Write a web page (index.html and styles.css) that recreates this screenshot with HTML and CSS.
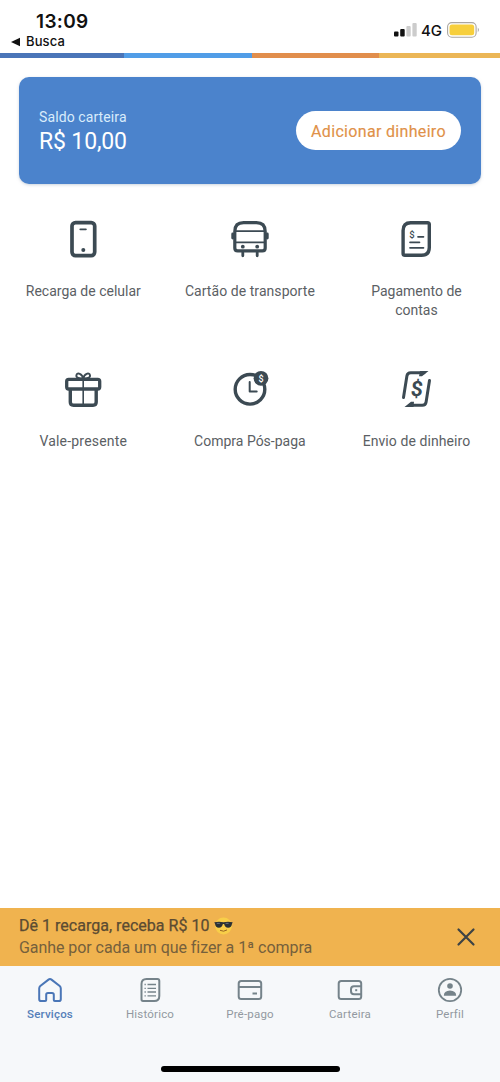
FILE: index.html
```html
<!DOCTYPE html>
<html lang="pt-BR">
<head>
<meta charset="utf-8">
<title>Serviços</title>
<link rel="stylesheet" href="styles.css">
</head>
<body>
<div class="app">
  <header class="status">
    <div class="status-left">
      <div class="time">13:09</div>
      <div class="back"><svg width="10" height="10" viewBox="0 0 10 10"><path d="M0 5 9 .7v8.6z" fill="#111"/></svg><span>Busca</span></div>
    </div>
    <div class="status-right">
      <svg width="23" height="14" viewBox="0 0 23 14"><rect x="0" y="8.5" width="4.5" height="5" rx="1" fill="#111"/><rect x="6.2" y="6" width="4.5" height="7.5" rx="1" fill="#111"/><rect x="12.4" y="3" width="4.3" height="10.5" rx="1" fill="#ccc"/><rect x="18.4" y="0" width="4.3" height="13.5" rx="1" fill="#ccc"/></svg>
      <span class="network">4G</span>
      <svg width="33" height="16" viewBox="0 0 33 16"><rect x=".6" y=".6" width="28.5" height="14.6" rx="4.2" fill="#fff" stroke="#aaa6a0" stroke-width="1.1"/><rect x="2.5" y="2.5" width="24.7" height="10.8" rx="2.5" fill="#f7cf3c"/><path d="M30.8 5.600q2 2.300 0 4.600z" fill="#999"/></svg>
    </div>
  </header>
  <div class="stripe"><i class="navy"></i><i class="sky"></i><i class="orange"></i><i class="gold"></i></div>

  <main class="content">
    <section class="balance">
      <div>
        <div class="balance-label">Saldo carteira</div>
        <div class="balance-value">R$ 10,00</div>
      </div>
      <button class="add">Adicionar dinheiro</button>
    </section>

    <section class="services">
      <div class="service">
        <svg class="icon" viewBox="0 0 40 40"><rect x="9" y="3.600" width="22.700" height="33" rx="3.500" stroke-width="3.700"/><path d="M17.300 10.300h5.600" stroke-width="1.800"/><circle cx="20.300" cy="31" r="2" class="solid"/></svg>
        <span class="t-recarga">Recarga de celular</span>
      </div>
      <div class="service">
        <svg class="icon" viewBox="0 0 40 40"><path d="M4.800 29V12.500Q4.800 3.700 13.600 3.700h12.800q8.800 0 8.800 8.800V29q0 2.900-2.900 2.900H7.700q-2.900 0-2.900-2.900z" stroke-width="3.200"/><path d="M6 12.200h28M6 23.400h28" stroke-width="1.800"/><path d="M2.700 15v4M37.300 15v4M12.800 33.500v3.300M27.200 33.500v3.300" stroke-width="2.800"/><circle cx="12.800" cy="27.700" r="1.900" class="solid"/><circle cx="27.200" cy="27.700" r="1.900" class="solid"/></svg>
        <span class="t-cartao">Cartão de transporte</span>
      </div>
      <div class="service">
        <svg class="icon" viewBox="0 0 40 40"><path d="M14.700 3.700H31.500q1.800 0 1.800 1.800V28.500q0 7.800-7.800 7.800H8.900q-1.800 0-1.800-1.800V11.500q0-7.800 7.600-7.800z" stroke-width="3.400"/><path d="M22 17.800h5.500M14 23.300h9.500M14 28.800h13.500" stroke-width="1.700"/><text x="13.200" y="18.800" font-size="9.500" class="dollar">$</text></svg>
        <span class="t-pagamento">Pagamento de<br>contas</span>
      </div>
      <div class="service">
        <svg class="icon" viewBox="0 0 40 40"><rect x="3.700" y="10.300" width="33" height="9.700" rx="2" stroke-width="3.300"/><path d="M7.300 21v12q0 3.200 3.200 3.200h19.500q3.200 0 3.200-3.200V21" stroke-width="3.400"/><path d="M20.200 10v27" stroke-width="1.600"/><path d="M20.200 9.500c-1-5-6-6.500-6.800-3.300-.6 2.800 3.400 3.300 6.800 3.300s7.400-.5 6.800-3.300c-.8-3.200-5.800-1.700-6.800 3.300z" stroke-width="1.900"/></svg>
        <span class="t-vale">Vale-presente</span>
      </div>
      <div class="service">
        <svg class="icon" viewBox="0 0 40 40"><circle cx="20" cy="20.300" r="14.800" stroke-width="3.400"/><path d="M19.700 13v9.500h7" stroke-width="2"/><circle cx="31" cy="9.300" r="7.400" class="solid"/><text x="28.400" y="12.600" font-size="9" class="dollar light">$</text></svg>
        <span class="t-compra">Compra Pós-paga</span>
      </div>
      <div class="service">
        <svg class="icon" viewBox="0 0 40 40"><path d="M7.500 28.500 10.900 7q.5-3.300 3.800-3.300H28M33.500 11.500 30.100 33q-.5 3.300-3.800 3.300H13.500" stroke-width="3"/><path d="M23 7.200h3l6.500-5.100H24zM18 32.800h-3l-6.500 5.100h9z" class="solid"/><text transform="translate(14.200 27.300) skewX(-5)" font-size="21" class="dollar big">$</text></svg>
        <span class="t-envio">Envio de dinheiro</span>
      </div>
    </section>
  </main>

  <aside class="promo">
    <div>
      <div class="promo-title"><span>Dê 1 recarga, receba R$ 10</span><svg width="19" height="18" viewBox="0 0 19 18"><circle cx="9.500" cy="9" r="8.400" fill="#f8ce49"/><path d="M.3 5.300Q5 4.300 9.500 5.300q4.500-1 9.200 0l-.7 1.500q-.5 4-3.900 4-3.200 0-4-3.700h-1.200q-.8 3.700-4 3.700-3.400 0-3.900-4z" fill="#2c3135"/><path d="M2.800 6.400h3M11.600 6.400h3" stroke="#75808a" stroke-width=".8"/><path d="M6 13.300q3.700 2 7-.4" fill="none" stroke="#986523" stroke-width="1"/></svg></div>
      <div class="promo-text">Ganhe por cada um que fizer a 1ª compra</div>
    </div>
    <svg class="close" width="20" height="20" viewBox="0 0 20 20"><path d="m2.500 2.500 15 15M17.500 2.500l-15 15"/></svg>
  </aside>

  <nav class="tabs">
    <div class="tab active"><svg viewBox="0 0 26 26"><path d="M2.200 11.500Q2.200 10 3.300 9L11.500 2.600q1.500-1.200 3 0L22.700 9q1.100 1 1.100 2.500v10.700q0 1.800-1.800 1.800h-4.200q-1 0-1-1v-5.200q0-1.800-1.800-1.800h-4q-1.800 0-1.800 1.800V23q0 1-1 1H4q-1.800 0-1.800-1.800z"/></svg><span class="t-servicos">Serviços</span></div>
    <div class="tab"><svg viewBox="0 0 26 26"><path d="M9.500 2h11Q22.300 2 22.300 4v15q0 5-5 5H6Q4.500 24 4.500 22.300V7q0-5 5-5z"/><path d="M10.500 7.500h8.500M10.500 11.300h8.500M10.500 15h8.500M10.500 18.800h8.500M7.500 7.500h1.300M7.500 11.300h1.300M7.500 15h1.300M7.500 18.800h1.300" stroke-width="1.300"/></svg><span class="t-historico">Histórico</span></div>
    <div class="tab"><svg viewBox="0 0 26 26"><rect x="1.700" y="4" width="22.500" height="18" rx="2.500"/><path d="M2 10h22M15.500 16.500h4.500"/></svg><span class="t-pre">Pré-pago</span></div>
    <div class="tab"><svg viewBox="0 0 26 26"><rect x="1.700" y="4" width="22.500" height="18" rx="2.500"/><path d="M24 9.200h-7q-3 0-3 3v2q0 3 3 3h7"/><path d="M18.200 13.200h2"/></svg><span class="t-carteira">Carteira</span></div>
    <div class="tab"><svg viewBox="0 0 26 26"><circle cx="13" cy="13" r="11.200" stroke-width="1.800"/><circle cx="13" cy="9" r="2.800" class="filled"/><path d="M6.800 18.700q0-5 6.200-5.200 6.200.2 6.200 5.200z" class="filled"/></svg><span class="t-perfil">Perfil</span></div>
  </nav>
  <footer class="home"><div class="home-bar"></div></footer>
</div>
</body>
</html>
```
FILE: styles.css
```css
* { box-sizing: border-box; }
body { margin: 0; background: #fff; font-family: Roboto, sans-serif; color: #5b6064; }
.app { width: 500px; height: 1082px; display: flex; flex-direction: column; overflow: hidden; }
.status { height: 53px; display: flex; justify-content: space-between; font-family: Inter, sans-serif; color: #111; }
.status-left { padding: 10px 0 0 11px; }
.time { padding-left: 25px; font-size: 19px; line-height: 23px; font-weight: 600; letter-spacing: .35px; }
.back { display: flex; align-items: center; gap: 5px; font-size: 13px; line-height: 17px; font-weight: 500; letter-spacing: .1px; }
.status-right { display: flex; align-items: center; height: 16px; margin: 22px 20px 0 0; }
.network { font-size: 15px; font-weight: 500; margin: 0 5px 0 4px; }
.stripe { display: grid; grid-template-columns: 124px 128px 127px 121px; height: 5px; }
.navy { background: #4a75b8; }
.sky { background: #519de7; }
.orange { background: #e18e4c; }
.gold { background: #ebb656; }
.content { flex: 1; padding: 19px 19px 0; }
.balance { height: 107px; padding: 2px 20px 0; display: flex; align-items: center; justify-content: space-between; border-radius: 10px; background: #4b83cc; color: #fff; box-shadow: 0 1px 3px #9aa9bd80; }
.balance-label { font-size: 14px; line-height: 20px; letter-spacing: .1px; color: #d9ecfb; }
.balance-value { font-size: 23px; line-height: 29px; letter-spacing: -.15px; }
.add { width: 165px; height: 39px; margin-top: -2px; padding: 2px 0 0; border: 0; border-radius: 20px; background: #fff; color: #df9149; font: 400 16px Roboto, sans-serif; letter-spacing: .32px; -webkit-text-stroke: .15px #df9149; white-space: nowrap; }
.services { display: grid; grid-template-columns: repeat(3, 166.600px); grid-auto-rows: 150px; margin: 35px -19px 0; }
.service { display: flex; flex-direction: column; align-items: center; gap: 23px; text-align: center; font-size: 14px; line-height: 19px; white-space: nowrap; }
.t-cartao { letter-spacing: .06px; }
.t-vale { letter-spacing: .2px; }
.t-envio { letter-spacing: .08px; }
.icon { width: 40px; height: 40px; fill: none; stroke: #3c4a53; stroke-linecap: round; stroke-linejoin: round; }
.icon .solid { fill: #3c4a53; stroke: none; }
.icon .dollar { fill: #3c4a53; stroke: none; font-family: Roboto, sans-serif; font-weight: 500; }
.icon .light { fill: #fff; }
.icon .big { font-weight: 700; }
.promo { height: 58px; padding: 0 24px 0 19px; display: flex; align-items: center; justify-content: space-between; background: #f0b34f; }
.promo-title { display: flex; align-items: center; gap: 5px; font-size: 16px; line-height: 22px; letter-spacing: .02px; color: #5b4b32; -webkit-text-stroke: .25px #5b4b32; white-space: nowrap; }
.promo-text { font-size: 16px; line-height: 22px; letter-spacing: -.06px; color: #75603c; white-space: nowrap; }
.close { fill: none; stroke: #3d4345; stroke-width: 2.200; stroke-linecap: round; }
.tabs { height: 85px; padding-top: 11px; display: grid; grid-template-columns: repeat(5, 1fr); background: #f6f8fa; }
.tab { display: flex; flex-direction: column; align-items: center; gap: 4px; font-size: 11.500px; line-height: 15px; letter-spacing: .2px; color: #9299a0; }
.tab svg { width: 26px; height: 26px; fill: none; stroke: #75838a; stroke-width: 2; }
.tab .filled { fill: #75838a; stroke: none; }
.active { color: #557fb9; font-weight: 500; }
.tab.active svg { stroke: #4a76b7; }
.home { height: 31px; padding-top: 15px; display: flex; justify-content: center; background: #f6f8fa; }
.home-bar { width: 179px; height: 6px; border-radius: 3px; background: #000; }
```
